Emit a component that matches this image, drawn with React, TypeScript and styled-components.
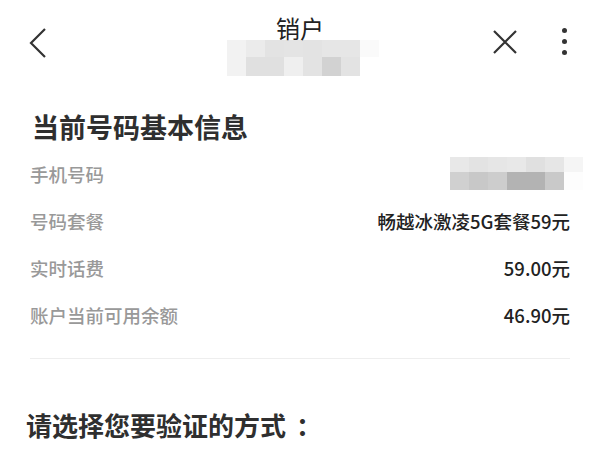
import styled, { createGlobalStyle } from 'styled-components';

const GlobalStyle = createGlobalStyle`
  body {
    margin: 0;
    background: #ffffff;
    font-family: "Noto Sans CJK SC", "Noto Sans", sans-serif;
    color: #333333;
  }
`;

const Page = styled.div`
  width: 600px;
  height: 450px;
  overflow: hidden;
  background: #ffffff;
`;

const Header = styled.header`
  display: grid;
  grid-template-columns: 1fr auto 1fr;
  align-items: start;
  height: 84px;
`;

const HeaderLeft = styled.div`
  display: flex;
  padding: 28px 0 0 29px;
`;

const HeaderCenter = styled.div`
  display: flex;
  flex-direction: column;
  align-items: center;
  padding-top: 16px;
`;

const HeaderRight = styled.div`
  display: flex;
  justify-content: flex-end;
  align-items: center;
  gap: 44px;
  padding: 28px 33px 0 0;
`;

const Title = styled.h1`
  margin: 0;
  font-size: 24px;
  line-height: 24px;
  font-weight: 400;
  color: #222222;
  position: relative;
  z-index: 1;
`;

const Mosaic = styled.div<{ $cols: number; $cell: number }>`
  display: grid;
  grid-template-columns: repeat(${(p) => p.$cols}, ${(p) => p.$cell}px);
  margin-left: ${(p) => (p.$cols === 8 ? 6 : 0)}px;
`;

const Cell = styled.div<{ $c: string; $h: number }>`
  height: ${(p) => p.$h}px;
  background: ${(p) => p.$c};
`;

const Dots = styled.div`
  display: flex;
  flex-direction: column;
  gap: 6px;
`;

const Dot = styled.span`
  width: 5px;
  height: 5px;
  border-radius: 50%;
  background: #333333;
`;

const Main = styled.main`
  padding: 25px 30px 0;
`;

const SectionTitle = styled.h2`
  margin: 0 0 5px;
  padding-left: 2px;
  font-size: 27px;
  line-height: 36px;
  font-weight: 700;
  color: #2f2f2f;
`;

const InfoRow = styled.div`
  display: flex;
  justify-content: space-between;
  align-items: center;
  height: 47px;
`;

const Label = styled.span`
  font-size: 18.5px;
  font-weight: 500;
  color: #999999;
`;

const Value = styled.span`
  font-size: 18.5px;
  font-weight: 500;
  color: #222222;
`;

const PhoneMosaic = styled.div`
  margin-right: -13px;
`;

const Divider = styled.hr`
  margin: 20px 0 0;
  border: none;
  border-top: 1px solid #eeeeee;
`;

const ChooseTitle = styled.h2`
  margin: 48px 0 0;
  padding-left: 26px;
  font-size: 26px;
  line-height: 36px;
  font-weight: 700;
  color: #2f2f2f;
`;

const Colon = styled.span`
  padding-left: 10px;
`;

const titleMosaic = [
  ['#f2f2f2', '#ebebeb', '#e3e3e3', '#e4e4e4', '#e3e3e3', '#e6e6e6', '#e6e6e6', '#fafafa'],
  ['#f2f2f2', '#e0e0e0', '#e0e0e0', '#efefef', '#e3e3e3', '#d2d2d2', '#e3e3e3', '#ffffff'],
];

const phoneMosaic = [
  ['#e8e8e8', '#e3e3e3', '#e6e6e6', '#e8e8e8', '#e0e0e0', '#e6e6e6', '#f5f5f5'],
  ['#d0d0d0', '#c8c8c8', '#cdcdcd', '#b3b3b3', '#b3b3b3', '#c9c9c9', '#fdfdfd'],
];

const rows = [
  { label: '号码套餐', value: '畅越冰激凌5G套餐59元' },
  { label: '实时话费', value: '59.00元' },
  { label: '账户当前可用余额', value: '46.90元' },
];

function BackIcon() {
  return (
    <svg width="18" height="30" viewBox="0 0 18 30" fill="none">
      <polyline points="16,1 2,15 16,29" stroke="#333" strokeWidth="2.2" />
    </svg>
  );
}

function CloseIcon() {
  return (
    <svg width="26" height="26" viewBox="0 0 26 26" fill="none">
      <path d="M2 2 L24 24 M24 2 L2 24" stroke="#333" strokeWidth="2.2" />
    </svg>
  );
}

export default function App() {
  return (
    <Page>
      <GlobalStyle />
      <Header>
        <HeaderLeft>
          <BackIcon />
        </HeaderLeft>
        <HeaderCenter>
          <Title>销户</Title>
          <Mosaic $cols={8} $cell={19}>
            {titleMosaic.map((row, r) =>
              row.map((c, i) => <Cell key={`${r}-${i}`} $c={c} $h={r === 0 ? 17 : 19} />)
            )}
          </Mosaic>
        </HeaderCenter>
        <HeaderRight>
          <CloseIcon />
          <Dots>
            <Dot />
            <Dot />
            <Dot />
          </Dots>
        </HeaderRight>
      </Header>

      <Main>
        <SectionTitle>当前号码基本信息</SectionTitle>
        <InfoRow>
          <Label>手机号码</Label>
          <PhoneMosaic>
            <Mosaic $cols={7} $cell={19}>
              {phoneMosaic.map((row, r) =>
                row.map((c, i) => <Cell key={`${r}-${i}`} $c={c} $h={r === 0 ? 15 : 18} />)
              )}
            </Mosaic>
          </PhoneMosaic>
        </InfoRow>
        {rows.map((row) => (
          <InfoRow key={row.label}>
            <Label>{row.label}</Label>
            <Value>{row.value}</Value>
          </InfoRow>
        ))}
        <Divider />
      </Main>
      <ChooseTitle>
        请选择您要验证的方式<Colon>：</Colon>
      </ChooseTitle>
    </Page>
  );
}
